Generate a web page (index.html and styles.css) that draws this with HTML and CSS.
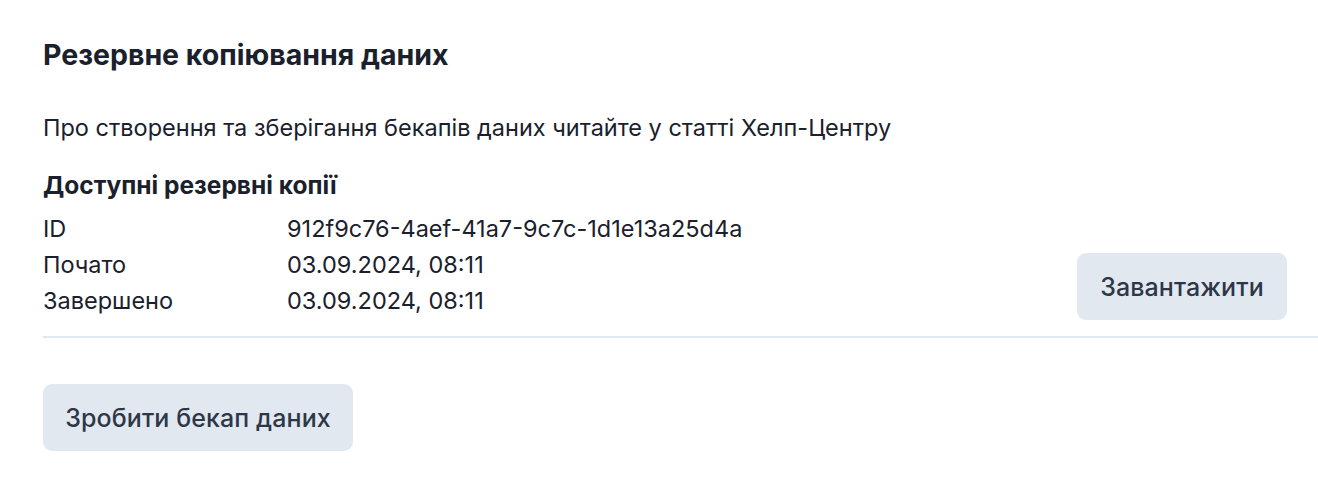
FILE: index.html
```html
<!DOCTYPE html>
<html lang="uk">
<head>
<meta charset="utf-8">
<link rel="stylesheet" href="styles.css">
</head>
<body>
<section class="backup">
  <h2 class="title">Резервне копіювання даних</h2>
  <p class="intro">Про створення та зберігання бекапів даних читайте у статті Хелп-Центру</p>
  <h3 class="subtitle">Доступні резервні копії</h3>
  <div class="item">
    <dl class="meta">
      <div class="row"><dt>ID</dt><dd>912f9c76-4aef-41a7-9c7c-1d1e13a25d4a</dd></div>
      <div class="row"><dt>Почато</dt><dd>03.09.2024, 08:11</dd></div>
      <div class="row"><dt>Завершено</dt><dd>03.09.2024, 08:11</dd></div>
    </dl>
    <button class="btn btn-download">Завантажити</button>
  </div>
  <div class="actions">
    <button class="btn btn-make">Зробити бекап даних</button>
  </div>
</section>
</body>
</html>
```

FILE: styles.css
```css
html, body {
  margin: 0;
  padding: 0;
  background: #ffffff;
}
body {
  font-family: Inter, "Noto Sans", sans-serif;
  color: #1a202c;
}
.backup {
  padding: 37px 0 0 43px;
}
.title {
  margin: 0;
  font-size: 28.5px;
  font-weight: 700;
  line-height: 36px;
}
.intro {
  margin: 37px 0 0;
  font-size: 23.5px;
  line-height: 36px;
}
.subtitle {
  margin: 21px 0 0;
  font-size: 24.5px;
  font-weight: 700;
  line-height: 36px;
}
.item {
  display: flex;
  align-items: flex-end;
  justify-content: space-between;
  padding: 8px 0 17px;
  border-bottom: 2px solid #e2e8f0;
}
.meta {
  margin: 0;
}
.row {
  display: flex;
  font-size: 23.5px;
  line-height: 36px;
}
.row dt {
  width: 244px;
}
.row dd {
  margin: 0;
}
.btn {
  font-family: inherit;
  border: none;
  background: #e2e8f0;
  color: #2d3748;
  font-size: 25px;
  font-weight: 500;
  letter-spacing: 0.1px;
  border-radius: 9px;
  height: 67px;
  padding: 0 20px;
  cursor: pointer;
}
.btn-download {
  margin-right: 31px;
  margin-bottom: -1px;
  width: 210px;
}
.actions {
  padding-top: 46px;
}
.btn-make {
  width: 310px;
}
```
